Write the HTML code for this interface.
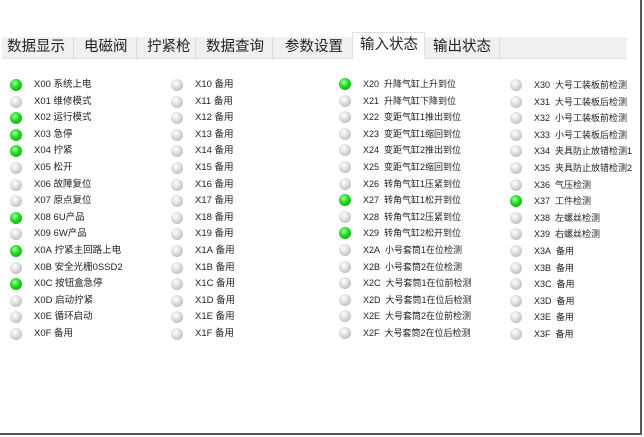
<!DOCTYPE html>
<html><head><meta charset="utf-8"><style>
body{margin:0;width:644px;height:437px;background:#fff;position:relative;overflow:hidden;font-family:"Liberation Sans","Noto Sans CJK SC",sans-serif}
.tabs{position:absolute;left:2px;top:37px;width:625px;height:21px;background:#f0f0f0;border-bottom:1px solid #e2e2e2}
.t{position:absolute;top:37px;height:21px;font-size:14.5px;line-height:20px;color:#222;border-right:1px solid #dcdcdc;padding:0 6px;box-sizing:border-box;white-space:nowrap}
.sel{top:32px;height:27px;background:#fff;border:1px solid #e0e0e0;border-bottom:none;line-height:24px}
.led{position:absolute;width:12px;height:12px;border-radius:50%;background:radial-gradient(circle at 40% 35%,#fff 0,#e4e4e4 35%,#a8a8a8 100%)}
.g{background:radial-gradient(circle at 40% 35%,#aaffaa 0,#22dd22 40%,#109010 100%)}
.l{position:absolute;font-size:9.5px;color:#222;white-space:nowrap;line-height:12px}
.s{font-size:9px}
.fr{position:absolute;right:2px;top:0;width:2px;height:435px;background:#555}
.fb{position:absolute;left:0;bottom:2px;width:642px;height:2px;background:#555}
</style></head><body>
<div class="tabs"></div>
<div class="t" style="left:2px;width:72px;padding-left:5px">数据显示</div>
<div class="t" style="left:74px;width:63px;padding-left:10px">电磁阀</div>
<div class="t" style="left:137px;width:59px;padding-left:10px">拧紧枪</div>
<div class="t" style="left:196px;width:77px;padding-left:10px">数据查询</div>
<div class="t" style="left:273px;width:80px;padding-left:12px">参数设置</div>
<div class="t sel" style="left:352px;width:73px;padding-left:7px">输入状态</div>
<div class="t" style="left:425px;width:75px;padding-left:8px">输出状态</div>
<div class="fr"></div><div class="fb"></div>
<div id="c"></div>
<script>
var cols=[
 {lx:10,tx:34,sp:'&nbsp;',cl:'',items:["X00 系统上电","X01 维修模式","X02 运行模式","X03 急停","X04 拧紧","X05 松开","X06 故障复位","X07 原点复位","X08 6U产品","X09 6W产品","X0A 拧紧主回路上电","X0B 安全光栅0SSD2","X0C 按钮盒急停","X0D 启动拧紧","X0E 循环启动","X0F 备用"],g:[0,2,3,4,8,10,12]},
 {lx:171,tx:195,sp:'&nbsp;',cl:'',items:["X10 备用","X11 备用","X12 备用","X13 备用","X14 备用","X15 备用","X16 备用","X17 备用","X18 备用","X19 备用","X1A 备用","X1B 备用","X1C 备用","X1D 备用","X1E 备用","X1F 备用"],g:[]},
 {lx:339,tx:363,sp:'&nbsp;&nbsp;',cl:' s',items:["X20 升降气缸上升到位","X21 升降气缸下降到位","X22 变距气缸1推出到位","X23 变距气缸1缩回到位","X24 变距气缸2推出到位","X25 变距气缸2缩回到位","X26 转角气缸1压紧到位","X27 转角气缸1松开到位","X28 转角气缸2压紧到位","X29 转角气缸2松开到位","X2A 小号套筒1在位检测","X2B 小号套筒2在位检测","X2C 大号套筒1在位前检测","X2D 大号套筒1在位后检测","X2E 大号套筒2在位前检测","X2F 大号套筒2在位后检测"],g:[0,7,9]},
 {lx:510,tx:534,sp:'&nbsp;&nbsp;',cl:' s',items:["X30 大号工装板前检测","X31 大号工装板后检测","X32 小号工装板前检测","X33 小号工装板后检测","X34 夹具防止放错检测1","X35 夹具防止放错检测2","X36 气压检测","X37 工件检测","X38 左螺丝检测","X39 右螺丝检测","X3A 备用","X3B 备用","X3C 备用","X3D 备用","X3E 备用","X3F 备用"],g:[7]}
];
var h="";
cols.forEach(function(c,ci){
 var y0=ci==2?78:79;
 c.items.forEach(function(s,i){
  var y=y0+i*16.6;
  h+='<div class="led'+(c.g.indexOf(i)>=0?' g':'')+'" style="left:'+c.lx+'px;top:'+y+'px"></div>';
  h+='<div class="l'+c.cl+'" style="left:'+c.tx+'px;top:'+y+'px">'+s.replace(' ',c.sp)+'</div>';
 });
});
document.getElementById('c').innerHTML=h;
</script>
</body></html>
